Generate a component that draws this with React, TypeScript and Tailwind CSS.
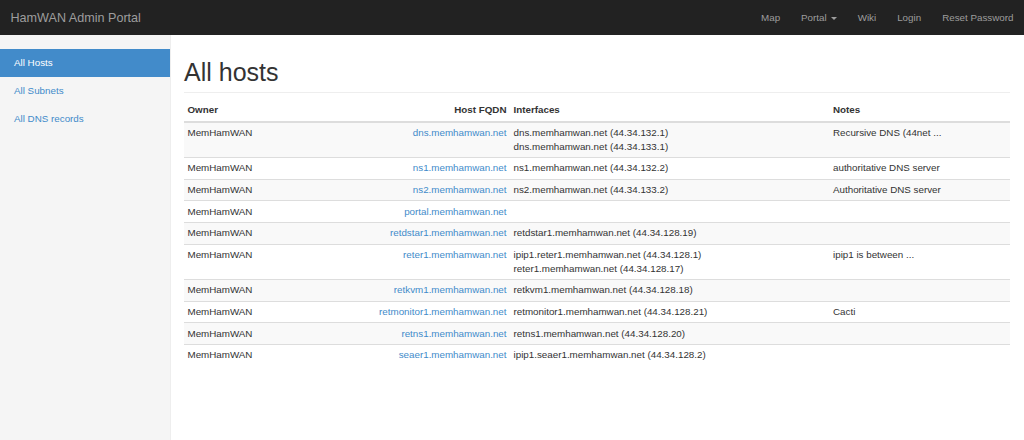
import React from 'react';

type Host = {
  owner: string;
  fqdn: string;
  interfaces: string[];
  notes: string;
};

const hosts: Host[] = [
  {
    owner: 'MemHamWAN',
    fqdn: 'dns.memhamwan.net',
    interfaces: ['dns.memhamwan.net (44.34.132.1)', 'dns.memhamwan.net (44.34.133.1)'],
    notes: 'Recursive DNS (44net ...',
  },
  { owner: 'MemHamWAN', fqdn: 'ns1.memhamwan.net', interfaces: ['ns1.memhamwan.net (44.34.132.2)'], notes: 'authoritative DNS server' },
  { owner: 'MemHamWAN', fqdn: 'ns2.memhamwan.net', interfaces: ['ns2.memhamwan.net (44.34.133.2)'], notes: 'Authoritative DNS server' },
  { owner: 'MemHamWAN', fqdn: 'portal.memhamwan.net', interfaces: [], notes: '' },
  { owner: 'MemHamWAN', fqdn: 'retdstar1.memhamwan.net', interfaces: ['retdstar1.memhamwan.net (44.34.128.19)'], notes: '' },
  {
    owner: 'MemHamWAN',
    fqdn: 'reter1.memhamwan.net',
    interfaces: ['ipip1.reter1.memhamwan.net (44.34.128.1)', 'reter1.memhamwan.net (44.34.128.17)'],
    notes: 'ipip1 is between ...',
  },
  { owner: 'MemHamWAN', fqdn: 'retkvm1.memhamwan.net', interfaces: ['retkvm1.memhamwan.net (44.34.128.18)'], notes: '' },
  { owner: 'MemHamWAN', fqdn: 'retmonitor1.memhamwan.net', interfaces: ['retmonitor1.memhamwan.net (44.34.128.21)'], notes: 'Cacti' },
  { owner: 'MemHamWAN', fqdn: 'retns1.memhamwan.net', interfaces: ['retns1.memhamwan.net (44.34.128.20)'], notes: '' },
  { owner: 'MemHamWAN', fqdn: 'seaer1.memhamwan.net', interfaces: ['ipip1.seaer1.memhamwan.net (44.34.128.2)'], notes: '' },
];

const sidebarLinks = ['All Hosts', 'All Subnets', 'All DNS records'];

function Navbar() {
  return (
    <div className="h-[35px] bg-[#222] flex items-center justify-between text-[#9d9d9d]">
      <a className="pl-[10.5px] text-[12.6px] leading-[14px]">HamWAN Admin Portal</a>
      <ul className="flex items-center text-[9.8px] leading-[14px]">
        <li className="px-[10.5px] py-[10.5px]">Map</li>
        <li className="px-[10.5px] py-[10.5px] flex items-center">
          Portal
          <span className="ml-[4px] mt-[1px] w-0 h-0 border-t-[3px] border-x-[3px] border-t-[#9d9d9d] border-x-transparent" />
        </li>
        <li className="px-[10.5px] py-[10.5px]">Wiki</li>
        <li className="px-[10.5px] py-[10.5px]">Login</li>
        <li className="px-[10.5px] py-[10.5px]">Reset Password</li>
      </ul>
    </div>
  );
}

function Sidebar() {
  return (
    <div className="w-[171px] shrink-0 bg-[#f5f5f5] border-r border-[#eee] pt-[14px]">
      <ul>
        {sidebarLinks.map((label, index) => (
          <li
            key={label}
            className={`h-[28px] px-[14px] flex items-center text-[9.8px] ${
              index === 0 ? 'bg-[#428bca] text-white' : 'text-[#428bca]'
            }`}
          >
            {label}
          </li>
        ))}
      </ul>
    </div>
  );
}

export default function App() {
  return (
    <div className="h-screen flex flex-col bg-white text-[#333] font-['Liberation_Sans',Arial,sans-serif]">
      <Navbar />
      <div className="flex flex-1 min-h-0">
        <Sidebar />
        <div className="flex-1 pl-[13px] pr-[14px] pt-[24px]">
          <h1 className="text-[25px] leading-[27px] pb-[6px] mb-[7px] border-b border-[#eee]">All hosts</h1>
          <table className="w-full table-fixed border-collapse text-[9.8px] leading-[14px]">
            <colgroup>
              <col className="w-[160px]" />
              <col className="w-[166px]" />
              <col className="w-[319.5px]" />
              <col />
            </colgroup>
            <thead>
              <tr>
                <th className="px-[3.5px] py-[3.3px] text-left font-bold border-b-2 border-[#ddd]">Owner</th>
                <th className="px-[3.5px] py-[3.3px] text-right font-bold border-b-2 border-[#ddd]">Host FQDN</th>
                <th className="px-[3.5px] py-[3.3px] text-left font-bold border-b-2 border-[#ddd]">Interfaces</th>
                <th className="px-[3.5px] py-[3.3px] text-left font-bold border-b-2 border-[#ddd]">Notes</th>
              </tr>
            </thead>
            <tbody>
              {hosts.map((host, index) => (
                <tr key={host.fqdn} className={index % 2 === 0 ? 'bg-[#f9f9f9]' : ''}>
                  <td className="px-[3.5px] py-[3.3px] align-top border-t border-[#ddd]">{host.owner}</td>
                  <td className="px-[3.5px] py-[3.3px] align-top text-right border-t border-[#ddd]">
                    <a className="text-[#428bca]">{host.fqdn}</a>
                  </td>
                  <td className="px-[3.5px] py-[3.3px] align-top border-t border-[#ddd]">
                    {host.interfaces.map((iface) => (
                      <div key={iface}>{iface}</div>
                    ))}
                  </td>
                  <td className="px-[3.5px] py-[3.3px] align-top border-t border-[#ddd]">{host.notes}</td>
                </tr>
              ))}
            </tbody>
          </table>
        </div>
      </div>
    </div>
  );
}
